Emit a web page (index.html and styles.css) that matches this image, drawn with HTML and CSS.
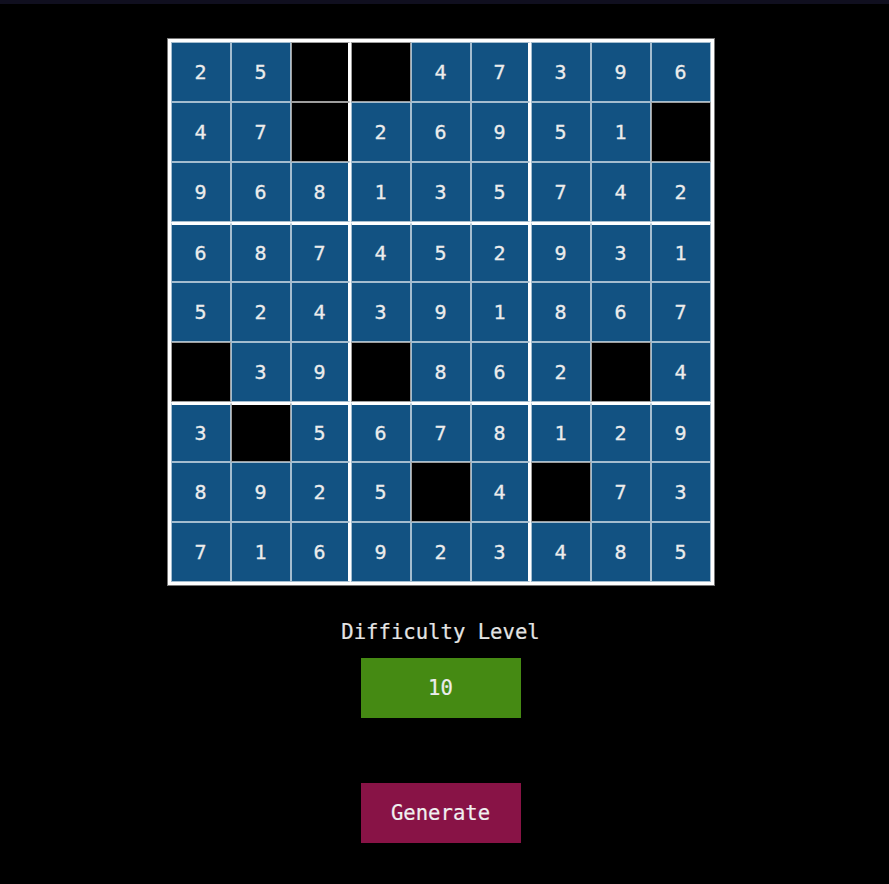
FILE: index.html
```html
<!DOCTYPE html>
<html>
<head>
<meta charset="utf-8">
<title>Sudoku</title>
<link rel="stylesheet" href="styles.css">
</head>
<body>
<div class="topbar"></div>
<main class="app">
  <div class="board">
    <div class="cell">2</div><div class="cell">5</div><div class="cell empty c3"></div><div class="cell empty"></div><div class="cell">4</div><div class="cell c6">7</div><div class="cell">3</div><div class="cell">9</div><div class="cell">6</div>
    <div class="cell">4</div><div class="cell">7</div><div class="cell empty c3"></div><div class="cell">2</div><div class="cell">6</div><div class="cell c6">9</div><div class="cell">5</div><div class="cell">1</div><div class="cell empty"></div>
    <div class="cell">9</div><div class="cell">6</div><div class="cell c3">8</div><div class="cell">1</div><div class="cell">3</div><div class="cell c6">5</div><div class="cell">7</div><div class="cell">4</div><div class="cell">2</div>
    <div class="cell r4">6</div><div class="cell r4">8</div><div class="cell r4 c3">7</div><div class="cell r4">4</div><div class="cell r4">5</div><div class="cell r4 c6">2</div><div class="cell r4">9</div><div class="cell r4">3</div><div class="cell r4">1</div>
    <div class="cell">5</div><div class="cell">2</div><div class="cell c3">4</div><div class="cell">3</div><div class="cell">9</div><div class="cell c6">1</div><div class="cell">8</div><div class="cell">6</div><div class="cell">7</div>
    <div class="cell empty"></div><div class="cell">3</div><div class="cell c3">9</div><div class="cell empty"></div><div class="cell">8</div><div class="cell c6">6</div><div class="cell">2</div><div class="cell empty"></div><div class="cell">4</div>
    <div class="cell r4">3</div><div class="cell r4 empty"></div><div class="cell r4 c3">5</div><div class="cell r4">6</div><div class="cell r4">7</div><div class="cell r4 c6">8</div><div class="cell r4">1</div><div class="cell r4">2</div><div class="cell r4">9</div>
    <div class="cell">8</div><div class="cell">9</div><div class="cell c3">2</div><div class="cell">5</div><div class="cell empty"></div><div class="cell c6">4</div><div class="cell empty"></div><div class="cell">7</div><div class="cell">3</div>
    <div class="cell">7</div><div class="cell">1</div><div class="cell c3">6</div><div class="cell">9</div><div class="cell">2</div><div class="cell c6">3</div><div class="cell">4</div><div class="cell">8</div><div class="cell">5</div>
  </div>
  <div class="label">Difficulty Level</div>
  <div class="level">10</div>
  <button class="generate">Generate</button>
</main>
</body>
</html>
```
FILE: styles.css
```css
html, body {
  margin: 0;
  padding: 0;
  background: #000;
}
body {
  font-family: "DejaVu Sans Mono", "Liberation Mono", monospace;
  color: #e6e6e6;
  height: 884px;
  overflow: hidden;
}
.topbar {
  height: 4px;
  background: #100f1f;
}
.app {
  width: 881px;
  display: flex;
  flex-direction: column;
  align-items: center;
}
.board {
  margin-top: 35px;
  display: grid;
  grid-template-columns: repeat(9, 60px);
  grid-template-rows: repeat(9, 60px);
  border: 3px solid #fff;
  box-shadow: 0 0 0 1px #777;
}
.cell {
  box-sizing: border-box;
  border: 1px solid rgba(255, 255, 255, 0.62);
  background: #125282;
  display: flex;
  align-items: center;
  justify-content: center;
  font-size: 20px;
  color: #ececec;
  -webkit-text-stroke: 0.3px #ececec;
}
.cell.empty {
  background: #000;
}
.cell.c3, .cell.c6 {
  border-right: 3px solid #fff;
}
.cell.r4 {
  border-top: 3px solid #fff;
}
.label {
  margin-top: 35px;
  font-size: 20.6px;
  line-height: 24px;
  color: #e4e4e4;
  -webkit-text-stroke: 0.2px #e4e4e4;
}
.level {
  margin-top: 14px;
  width: 160px;
  height: 60px;
  background: #458a13;
  display: flex;
  align-items: center;
  justify-content: center;
  font-size: 20.6px;
  color: #ececec;
  -webkit-text-stroke: 0.2px #ececec;
}
.generate {
  margin-top: 65px;
  width: 160px;
  height: 60px;
  border: none;
  padding: 0;
  background: #881346;
  color: #f0f0f0;
  font-family: "DejaVu Sans Mono", "Liberation Mono", monospace;
  font-size: 20.6px;
  -webkit-text-stroke: 0.2px #f0f0f0;
}
```
